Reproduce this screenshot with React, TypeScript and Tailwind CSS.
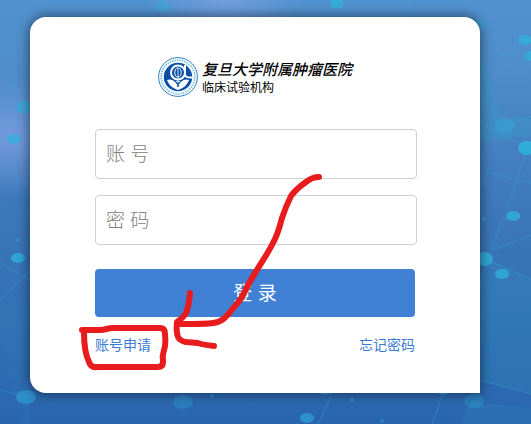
import React from "react";

const dots = [
  { x: 163, y: 6, rx: 7, ry: 5, o: 0.5 },
  { x: 337, y: 4, rx: 7, ry: 5, o: 0.8 },
  { x: 24, y: 107, rx: 7, ry: 7, o: 0.6 },
  { x: 14, y: 139, rx: 7, ry: 5, o: 0.7 },
  { x: 18, y: 258, rx: 7, ry: 5, o: 0.8 },
  { x: 26, y: 397, rx: 10, ry: 7, o: 0.5 },
  { x: 479, y: 25, rx: 6, ry: 7, o: 0.4 },
  { x: 525, y: 40, rx: 7, ry: 5, o: 0.8 },
  { x: 531, y: 56, rx: 7, ry: 5, o: 0.8 },
  { x: 505, y: 126, rx: 10, ry: 8, o: 0.4 },
  { x: 527, y: 148, rx: 9, ry: 7, o: 0.9 },
  { x: 513, y: 216, rx: 7, ry: 5, o: 0.8 },
  { x: 485, y: 259, rx: 8, ry: 7, o: 0.8 },
  { x: 502, y: 274, rx: 7, ry: 5, o: 0.8 },
  { x: 183, y: 402, rx: 10, ry: 7, o: 0.3 },
  { x: 307, y: 418, rx: 7, ry: 5, o: 0.6 },
  { x: 325, y: 391, rx: 6, ry: 4, o: 0.6 },
  { x: 443, y: 391, rx: 6, ry: 4, o: 0.6 },
  { x: 474, y: 401, rx: 10, ry: 7, o: 0.3 },
  { x: 14, y: 85, rx: 2, ry: 2, o: 0.3 },
  { x: 18, y: 240, rx: 2, ry: 2, o: 0.4 },
  { x: 496, y: 33, rx: 2, ry: 1, o: 0.4 },
  { x: 501, y: 54, rx: 2, ry: 2, o: 0.4 },
  { x: 484, y: 219, rx: 2, ry: 2, o: 0.5 },
  { x: 212, y: 396, rx: 2, ry: 2, o: 0.4 },
  { x: 352, y: 400, rx: 2, ry: 2, o: 0.4 },
  { x: 382, y: 421, rx: 2, ry: 2, o: 0.4 },
];

function Backdrop() {
  return (
    <svg
      className="absolute inset-0 -z-10 h-full w-full"
      viewBox="0 0 531 424"
      preserveAspectRatio="xMidYMid slice"
      aria-hidden="true"
    >
      <defs>
        <linearGradient id="sky" x1="0" y1="0" x2="0" y2="1">
          <stop offset="0" stopColor="#5192d0" />
          <stop offset="0.15" stopColor="#4f8dcb" />
          <stop offset="0.5" stopColor="#3c77ba" />
          <stop offset="0.75" stopColor="#3270b5" />
          <stop offset="1" stopColor="#2a66ae" />
        </linearGradient>
        <radialGradient id="haze">
          <stop offset="0" stopColor="#7a9fe2" stopOpacity="0.85" />
          <stop offset="1" stopColor="#7a9fe2" stopOpacity="0" />
        </radialGradient>
      </defs>
      <rect width="531" height="424" fill="url(#sky)" />
      <ellipse cx="10" cy="136" rx="90" ry="62" fill="url(#haze)" />
      <ellipse cx="225" cy="0" rx="80" ry="34" fill="url(#haze)" />
      <g fill="#2fa9cc">
        <path d="M480 45L502 120L531 116V136L480 142Z" opacity="0.22" />
        <path d="M480 284L492 262L531 279V394L480 381Z" opacity="0.15" />
        <path d="M0 300L30 309V424H24L0 345Z" opacity="0.06" />
        <path d="M470 402L531 408V424H460Z" opacity="0.15" />
      </g>
      <g stroke="#35b0d8" strokeWidth="1.5" opacity="0.25" fill="none">
        <path d="M0 263L30 280M0 300L30 271M0 390L26 397M0 110L24 107" />
        <path d="M480 122L527 148L507 210M505 126L531 116M480 170L531 183" />
        <path d="M513 216L502 220L480 284M485 259L531 279M492 250L531 235" />
        <path d="M480 380L531 394M332 394L318 424M443 393L432 424M410 0L407 17" />
      </g>
      <g fill="#2fb0dc">
        {dots.map((d) => (
          <ellipse key={`${d.x}-${d.y}`} cx={d.x} cy={d.y} rx={d.rx} ry={d.ry} opacity={d.o} />
        ))}
      </g>
    </svg>
  );
}

function Emblem() {
  return (
    <svg className="size-10 shrink-0" viewBox="0 0 40 40" fill="none" aria-hidden="true">
      <circle cx="20" cy="20" r="19.4" fill="#fff" stroke="#2f80c2" strokeWidth="1" />
      <circle cx="20" cy="20" r="16.8" stroke="#6fc0e6" strokeWidth="1.8" strokeDasharray="1.4 1.1" />
      <circle cx="20" cy="20" r="14.2" fill="#0b4ea6" />
      <path d="M9 23C14 21 18 25 20 29C22 25 26 21 31 23C29 28 26 31 20 33C14 31 11 28 9 23Z" fill="#fff" />
      <circle cx="20" cy="15.500" r="7" stroke="#fff" strokeWidth="2" />
      <path d="M27 8V18Q28 21 34 20.500" stroke="#fff" strokeWidth="2" />
      <ellipse cx="20" cy="15.500" rx="3.200" ry="4.500" stroke="#fff" strokeWidth="1" />
      <path d="M20 12V28M18 24.500H22" stroke="#d4e5f6" strokeWidth="1" />
      <path d="M20 26V30" stroke="#0b4ea6" strokeWidth="1.500" />
    </svg>
  );
}

function Markup() {
  return (
    <svg
      className="pointer-events-none absolute left-0 top-0 h-[424px] w-[531px]"
      viewBox="0 0 531 424"
      fill="none"
      stroke="#e81c1c"
      strokeWidth="6"
      strokeLinecap="round"
      strokeLinejoin="round"
      aria-hidden="true"
    >
      <path d="M319 177Q312 177 306 182Q296 189 291 196Q286 206 282 218Q278 234 273 243C266 257 256 270 247 287C243 296 240 301 235 306C228 314 224 322 213 323Q207 324 180 324" />
      <path d="M190 293Q189 306 186 313Q184 317 177 322Q176 332 178 337Q180 341 186 342L198 343Q204 345 214 346" />
      <path d="M82 330H100C106 330 107 328 113 328H160Q165 328 165 334Q166 345 164 350Q162 356 163 362Q163 367 158 367H97Q91 368 89 362Q84 352 84 332" />
    </svg>
  );
}

const fieldClass =
  "block h-[50px] w-full rounded border border-[#d0d0d0] bg-white px-2.5 pt-0.5 text-[19px] font-light text-[#333] outline-none placeholder:text-[#808080]";

export default function App() {
  return (
    <main className="relative isolate min-h-screen overflow-hidden pt-[17px] pr-[51px] pb-[31px] pl-[30px] font-['Liberation_Sans','Noto_Sans_CJK_SC',sans-serif]">
      <Backdrop />
      <section className="w-full max-w-[450px] rounded-2xl rounded-br-none bg-white px-[65px] pt-10 pb-[38px] shadow-[0_0_12px_1px_rgba(0,0,0,0.5)]">
        <header className="flex items-center justify-center gap-1">
          <Emblem />
          <div className="pt-0.5 whitespace-nowrap text-black">
            <h1 className="text-[15px] leading-5 font-medium italic">复旦大学附属肿瘤医院</h1>
            <p className="text-xs leading-4">临床试验机构</p>
          </div>
        </header>
        <form className="mt-8" onSubmit={(e) => e.preventDefault()}>
          <div className="-mr-0.5 flex flex-col gap-4">
            <input className={fieldClass} type="text" aria-label="账号" placeholder="账 号" />
            <input className={fieldClass} type="password" aria-label="密码" placeholder="密 码" />
          </div>
          <button
            type="submit"
            className="mt-6 h-12 w-full rounded bg-[#4081d6] pt-0.5 text-[19px] text-white"
          >
            登 录
          </button>
          <div className="mt-[18px] flex justify-between text-sm text-[#3b7cd4]">
            <a href="#apply">账号申请</a>
            <a href="#forgot">忘记密码</a>
          </div>
        </form>
      </section>
      <Markup />
    </main>
  );
}
